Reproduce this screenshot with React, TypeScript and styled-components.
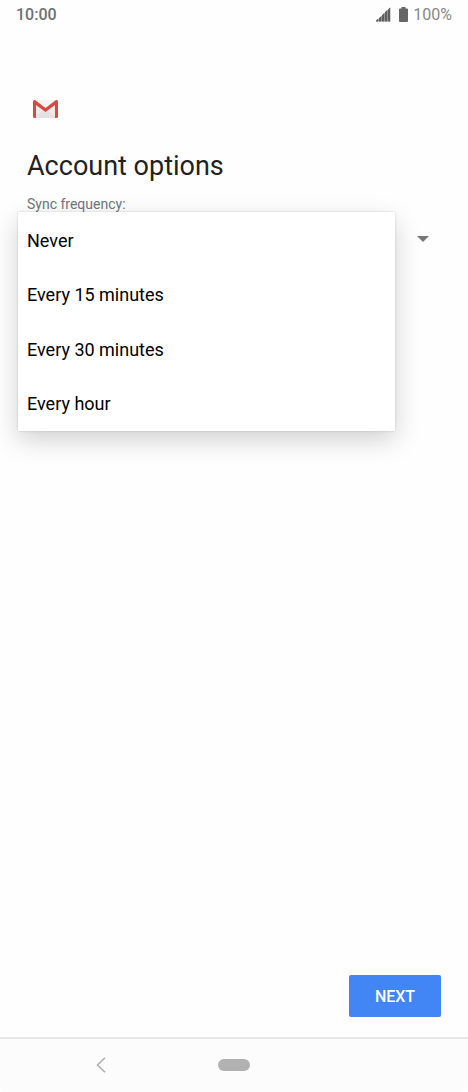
import React, { useState } from 'react';
import styled, { createGlobalStyle } from 'styled-components';

const GlobalStyle = createGlobalStyle`
  *, *::before, *::after { box-sizing: border-box; }
  body {
    margin: 0;
    background: #fefefe;
    font-family: Roboto, "Liberation Sans", sans-serif;
    color: #222;
  }
  button, select { font: inherit; }
`;

const Screen = styled.div`
  display: flex;
  flex-direction: column;
  min-height: 100vh;
`;

const StatusBar = styled.header`
  display: flex;
  align-items: center;
  justify-content: space-between;
  height: 30px;
  padding: 0 16px;
  font-size: 16px;
  line-height: 20px;
`;

const Clock = styled.time`
  color: #707070;
  font-weight: 500;
`;

const Indicators = styled.div`
  display: flex;
  align-items: center;
  color: #888;
  svg {
    display: block;
    margin-bottom: 2px;
  }
`;

const SignalIcon = styled.svg`
  margin-right: 8px;
`;

const BatteryIcon = styled.svg`
  margin-right: 5px;
`;

const Content = styled.main`
  flex: 1;
  display: flex;
  flex-direction: column;
  padding: 69px 27px 20px;
`;

const Logo = styled.svg`
  display: block;
  margin-left: 5px;
`;

const Title = styled.h1`
  margin: 29px 0 0;
  font-size: 27px;
  line-height: 36px;
  font-weight: 400;
`;

const Field = styled.div`
  position: relative;
  margin-top: 12px;
`;

const FieldLabel = styled.label`
  display: block;
  font-size: 14px;
  line-height: 16px;
  color: #70757a;
`;

const SelectRow = styled.div`
  display: grid;
  align-items: center;
  margin-top: 5px;
  > * { grid-area: 1 / 1; }
`;

const Select = styled.select`
  width: 100%;
  height: 44px;
  padding: 0;
  border: 0;
  appearance: none;
  background: transparent;
  font-size: 18px;
  color: #000;
`;

const Caret = styled.svg`
  justify-self: end;
  margin-right: 12px;
  pointer-events: none;
`;

const Menu = styled.ul`
  position: absolute;
  top: 16px;
  left: -9px;
  right: 46px;
  margin: 0;
  padding: 1px 0 0;
  list-style: none;
  display: grid;
  grid-auto-rows: 1fr;
  min-height: 219px;
  background: #fff;
  box-shadow: 0 0 2px rgba(0, 0, 0, 0.16), 0 9px 24px rgba(0, 0, 0, 0.18);
`;

const MenuOption = styled.button`
  display: block;
  width: 100%;
  height: 100%;
  padding: 1px 9px 0;
  border: 0;
  background: transparent;
  font-size: 18px;
  line-height: 24px;
  text-align: left;
  color: #000;
  cursor: pointer;
`;

const Actions = styled.div`
  display: flex;
  justify-content: flex-end;
  margin-top: auto;
`;

const NextButton = styled.button`
  min-width: 92px;
  height: 42px;
  padding: 2px 24px 0;
  border: 0;
  border-radius: 2px;
  background: #4285f4;
  color: #fff;
  font-size: 16px;
  font-weight: 500;
  line-height: 20px;
  cursor: pointer;
`;

const NavBar = styled.nav`
  display: grid;
  grid-template-columns: 1fr auto 1fr;
  align-items: center;
  height: 55px;
  padding-bottom: 2px;
  border-top: 2px solid #e8e8e8;
  border-radius: 0 0 8px 8px;
  background: #fcfcfc;
`;

const NavButton = styled.button`
  display: flex;
  justify-self: start;
  margin-left: 92px;
  padding: 4px;
  border: 0;
  background: transparent;
  cursor: pointer;
`;

const HomePill = styled.button`
  width: 32px;
  height: 12px;
  padding: 0;
  border: 0;
  border-radius: 6px;
  background: #b1b1b1;
  cursor: pointer;
`;

const frequencies = ['Never', 'Every 15 minutes', 'Every 30 minutes', 'Every hour'];

export default function App() {
  const [open, setOpen] = useState(true);
  const [frequency, setFrequency] = useState(frequencies[0]);

  const choose = (value: string) => {
    setFrequency(value);
    setOpen(false);
  };

  return (
    <>
      <GlobalStyle />
      <Screen>
        <StatusBar>
          <Clock>10:00</Clock>
          <Indicators>
            <SignalIcon width="15" height="15" viewBox="0 0 15 15" aria-hidden="true">
              <path d="M0 14.5L14.2 .4V14.5Z" fill="#a2a2a2" />
              <path
                d="M0 14.5V13.5L2.2 11.6V14.5ZM3 14.5V11.2L5.2 9V14.5ZM6 14.5V8.2L8.2 6V14.5ZM9 14.5V5.2L11.2 3V14.5ZM12 14.5V2.4L14.2 .4V14.5Z"
                fill="#606060"
              />
            </SignalIcon>
            <BatteryIcon width="9" height="15" viewBox="0 0 9 15" aria-hidden="true">
              <path
                d="M2.5 0H6.5V1.5H8Q9 1.5 9 2.5V14Q9 15 8 15H1Q0 15 0 14V2.5Q0 1.5 1 1.5H2.5Z"
                fill="#666"
              />
            </BatteryIcon>
            100%
          </Indicators>
        </StatusBar>

        <Content>
          <Logo width="27" height="20" viewBox="0 0 27 20" role="img" aria-label="Gmail">
            <rect x="1" y="1" width="25" height="18" rx="1.5" fill="#ebebeb" />
            <path d="M3 19L13.5 9.5L24 19Z" fill="#e2e2e2" />
            <path d="M3 1H24L13.5 9.5Z" fill="#f4f4f4" />
            <path
              d="M1 2.5V17.5Q1 19 2.5 19H4V6L13.5 13L23 6V19H24.5Q26 19 26 17.5V2.5Q26 1 24.5 1H24L13.5 9L3 1H2.5Q1 1 1 2.5Z"
              fill="#d54b3f"
            />
          </Logo>
          <Title>Account options</Title>

          <Field>
            <FieldLabel htmlFor="sync-frequency">Sync frequency:</FieldLabel>
            <SelectRow>
              <Select
                id="sync-frequency"
                value={frequency}
                onChange={(event) => choose(event.target.value)}
                onMouseDown={(event) => {
                  event.preventDefault();
                  setOpen(!open);
                }}
              >
                {frequencies.map((item) => (
                  <option key={item}>{item}</option>
                ))}
              </Select>
              <Caret width="12" height="6" viewBox="0 0 12 6" aria-hidden="true">
                <path d="M0 0H12L6 6Z" fill="#777" />
              </Caret>
            </SelectRow>
            {open && (
              <Menu aria-label="Sync frequency">
                {frequencies.map((item) => (
                  <li key={item}>
                    <MenuOption type="button" onClick={() => choose(item)}>
                      {item}
                    </MenuOption>
                  </li>
                ))}
              </Menu>
            )}
          </Field>

          <Actions>
            <NextButton type="button">NEXT</NextButton>
          </Actions>
        </Content>

        <NavBar>
          <NavButton type="button" aria-label="Back">
            <svg width="10" height="16" viewBox="0 0 10 16" aria-hidden="true">
              <path d="M9 .7L1.5 8L9 15.3" fill="none" stroke="#b0b0b0" strokeWidth="1.6" />
            </svg>
          </NavButton>
          <HomePill type="button" aria-label="Home" />
        </NavBar>
      </Screen>
    </>
  );
}
